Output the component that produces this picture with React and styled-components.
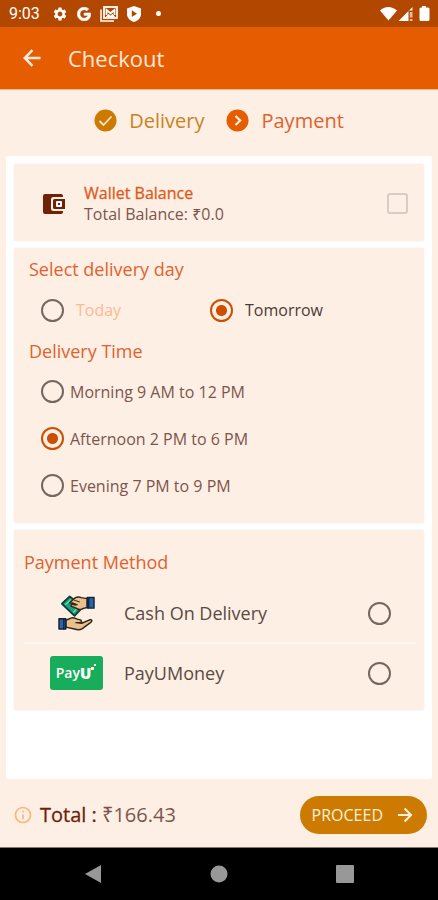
import React, { useState } from "react";
import styled, { createGlobalStyle } from "styled-components";
import { FaGoogle } from "react-icons/fa";
import { MdSettings, MdInfoOutline } from "react-icons/md";

const color = {
  cream: "#feefe5",
  orange: "#e65c00",
  orangeDark: "#b24700",
  title: "#e0622e",
  accent: "#cc4e00",
  amber: "#cc7a00",
  brown: "#7d554c",
  maroon: "#6b1f0c",
};

const GlobalStyle = createGlobalStyle`
  *, *::before, *::after { box-sizing: border-box; }
  body { margin: 0; background: ${color.cream}; font-family: "Open Sans", "Noto Sans", sans-serif; }
  button, input { font: inherit; margin: 0; }
  h1, h2, p { margin: 0; font-weight: 400; }
`;

const Screen = styled.div`
  min-height: 100vh;
  display: flex;
  flex-direction: column;
  background: ${color.cream};
`;

const StatusBar = styled.div`
  height: 27px;
  padding: 0 8px 0 9px;
  display: flex;
  align-items: center;
  justify-content: space-between;
  background: ${color.orangeDark};
  color: #fff;
`;

const StatusGroup = styled.div`
  display: flex;
  align-items: center;
  gap: 9px;
`;

const Clock = styled.time`
  width: 34px;
  font: 400 16px/20px Roboto, sans-serif;
`;

const Dot = styled.span`
  width: 5px;
  height: 5px;
  margin-left: 6px;
  border-radius: 50%;
  background: #fff;
`;

const AppBar = styled.header`
  height: 63px;
  padding: 0 20px;
  display: flex;
  align-items: center;
  gap: 24px;
  background: ${color.orange};
  border-bottom: 1px solid #ffb596;
  color: #ffe9dc;
`;

const BarTitle = styled.h1`
  font-size: 22px;
  line-height: 30px;
`;

const IconButton = styled.button`
  display: flex;
  padding: 0;
  border: 0;
  background: none;
  color: inherit;
  cursor: pointer;
`;

const Steps = styled.nav`
  height: 66px;
  padding-bottom: 5px;
  display: flex;
  align-items: center;
  justify-content: center;
  gap: 22px;
`;

const Step = styled.a`
  display: flex;
  align-items: center;
  gap: 12px;
  font-size: 20px;
  line-height: 28px;
  text-decoration: none;
  color: ${(p) => (p.$current ? color.title : "#c98321")};
`;

const Panel = styled.main`
  flex: 1;
  margin: 0 6px;
  padding: 8px;
  display: flex;
  flex-direction: column;
  gap: 7px;
  background: #fff;
  border-radius: 2px;
`;

const Card = styled.section`
  padding: ${(p) => p.$pad};
  background: ${color.cream};
  box-shadow: 0 0 2px #e9e9ee;
  border-radius: 2px;
`;

const WalletRow = styled.label`
  height: 77px;
  padding-top: 2px;
  display: flex;
  align-items: center;
  gap: 18px;
`;

const WalletText = styled.span`
  flex: 1;
  font-size: 16px;
  line-height: 21px;
  color: ${color.brown};
`;

const WalletName = styled.span`
  display: block;
  color: #dd5a1c;
  -webkit-text-stroke: 0.3px currentColor;
`;

const CheckBox = styled.input`
  appearance: none;
  width: 21px;
  height: 21px;
  border: 2px solid #dacbc4;
  border-radius: 3px;
  &:checked { background: ${color.accent}; border-color: ${color.accent}; }
`;

const Heading = styled.h2`
  font-size: 18px;
  line-height: 26px;
  color: ${color.title};
`;

const DayGrid = styled.div`
  height: 56px;
  display: grid;
  grid-template-columns: 169px 1fr;
  align-items: center;
  padding-left: 12px;
`;

const TimeList = styled.div`
  padding: 4px 0 0 12px;
`;

const Option = styled.label`
  display: flex;
  align-items: center;
  gap: ${(p) => (p.$wide ? 12 : 6)}px;
  font-size: 16px;
  color: ${(p) => p.$tone || color.brown};
`;

const TimeOption = styled(Option)`
  height: 47px;
`;

const Radio = styled.input.attrs({ type: "radio" })`
  appearance: none;
  flex: none;
  width: 23px;
  height: 23px;
  border: 2px solid #75675f;
  border-radius: 50%;
  &:checked {
    border-color: ${color.accent};
    background: radial-gradient(circle, ${color.accent} 5px, transparent 6px);
  }
`;

const Methods = styled.div`
  margin-top: 9px;
`;

const Method = styled.label`
  height: 58px;
  display: grid;
  grid-template-columns: 100px 1fr auto;
  align-items: center;
  padding-right: 25px;
  font-size: 18px;
  color: #5b4a43;
  & + & { height: 60px; border-top: 2px solid #fffaf7; }
`;

const MethodArt = styled.span`
  display: flex;
  justify-content: center;
  padding-left: 4px;
`;

const PayULogo = styled.span`
  width: 53px;
  height: 34px;
  display: flex;
  align-items: center;
  justify-content: center;
  border-radius: 3px;
  background: #18ad5b;
  color: #fff;
  font-size: 14px;
  font-weight: 600;
  line-height: 20px;
  b { font-weight: 800; font-size: 15px; }
  svg { align-self: flex-start; margin-top: 8px; }
`;

const Footer = styled.footer`
  height: 69px;
  padding: 4px 11px 0 13px;
  display: flex;
  align-items: center;
  gap: 7px;
  border-bottom: 1px solid #837b76;
  color: #ffb27a;
`;

const Total = styled.p`
  flex: 1;
  font-size: 20px;
  line-height: 28px;
  color: ${color.brown};
`;

const TotalLabel = styled.span`
  font-weight: 500;
  color: ${color.maroon};
  -webkit-text-stroke: 0.3px currentColor;
`;

const Proceed = styled.button`
  height: 38px;
  padding: 0 12px;
  display: flex;
  align-items: center;
  gap: 12px;
  border: 0;
  border-radius: 19px;
  background: ${color.amber};
  color: #fff0dc;
  font-size: 16px;
  cursor: pointer;
`;

const NavBar = styled.nav`
  height: 52px;
  display: grid;
  grid-template-columns: repeat(3, 126px);
  justify-content: center;
  align-items: center;
  justify-items: center;
  background: #000;
  color: #989898;
`;

const BackArrow = () => (
  <svg width="24" height="24" viewBox="0 0 24 24" fill="none" stroke="currentColor" strokeWidth="2.500">
    <path d="M20.500 12H5M12.500 4.200L4.800 12l7.700 7.800" />
  </svg>
);

const ForwardArrow = () => (
  <svg width="20" height="20" viewBox="0 0 24 24" fill="none" stroke="currentColor" strokeWidth="2.600">
    <path d="M3.500 12H19M11.500 4.200l7.700 7.800-7.700 7.800" />
  </svg>
);

const GalleryIcon = () => (
  <svg width="18" height="16" viewBox="0 0 18 16" fill="none" stroke="#fff">
    <path d="M1 3.500V15h13" strokeWidth="1.500" />
    <rect x="4" y="1" width="13" height="11" strokeWidth="1.800" />
    <path d="M6.500 9V4l4 3.300L14.500 4v5" strokeWidth="1.800" />
    <path d="M6.500 10.500l2-2 2 1.500 2-1.500 2 2z" fill="#fff" />
  </svg>
);

const ShieldIcon = () => (
  <svg width="14" height="16" viewBox="0 0 14 16">
    <path fill="#fff" d="M7 0l7 2.500v5.500c0 3.800-3 6.800-7 8-4-1.200-7-4.200-7-8V2.500z" />
    <path fill={color.orangeDark} d="M4.800 4.300l5.200 3.400-5.200 3.400z" />
  </svg>
);

const SignalIcons = () => (
  <svg width="50" height="16" viewBox="0 0 50 16" fill="#fff">
    <path d="M0 4.500C4.500-.2 12-.2 17 4.500L8.500 14.500z" />
    <path d="M18.500 15L32.500 1v3.500h-4V15z" />
    <path d="M29.800 6h2.700v5.500h-2.700zM29.800 13h2.700v2h-2.700z" opacity=".65" />
    <path d="M42 1.500V0h4v1.500h2q1.500 0 1.500 1.500v10.500q0 1.500-1.500 1.500h-7q-1.500 0-1.500-1.500V3q0-1.500 1.500-1.500z" />
  </svg>
);

const StepDone = () => (
  <svg width="23" height="23" viewBox="0 0 23 23">
    <circle cx="11.500" cy="11.500" r="11" fill={color.amber} />
    <path d="M5.500 12l4 4 8-8.500" fill="none" stroke="#fbe3c8" strokeWidth="1.800" />
  </svg>
);

const StepNext = () => (
  <svg width="23" height="23" viewBox="0 0 23 23">
    <circle cx="11.500" cy="11.500" r="11" fill={color.orange} />
    <path d="M9.500 7l4.700 4.500-4.700 4.500" fill="none" stroke="#fff0e4" strokeWidth="2.200" />
  </svg>
);

const WalletIcon = () => (
  <svg width="24" height="22" viewBox="0 0 24 22">
    <path fill="#702206" d="M3 1h16q2 0 2 2v1H11.500Q9 4 9 6.500v9Q9 18 11.500 18H21v1q0 2-2 2H3q-2 0-2-2V3q0-2 2-2z" />
    <path fill="#702206" d="M12.500 6H23v10H12.500q-1.500 0-1.500-1.500v-7Q11 6 12.500 6z" />
    <rect x="14" y="8" width="6" height="6" rx="1" fill="#fff" />
    <rect x="16" y="10" width="2" height="2" fill="#702206" />
  </svg>
);

const CashIcon = () => (
  <svg width="37" height="36" viewBox="0 0 38 37" strokeLinejoin="round" strokeLinecap="round">
    <path d="M4 9l8-7.500L26 12l-9 9.500z" fill="#16a37c" stroke="#0f3a35" strokeWidth="1.800" />
    <path d="M8 9.500l5-4.500M16 17.500l5-5" stroke="#74dcb8" strokeWidth="1.300" />
    <path d="M12 8l5-4.500c2-1.500 5-1.500 7-.8l6 1v9l-5 1.500c-2 1-5 .6-7-1l-4-1.500c-1.500-1 0-2.500 1.500-2l3 .5-4-1.700z" fill="#eac18d" stroke="#33251b" strokeWidth="1.500" />
    <path d="M17 5.500l5 1.500M15 8l5 2" fill="none" stroke="#33251b" strokeWidth="1" />
    <rect x="30" y="2.500" width="7" height="11" fill="#2467a8" stroke="#14243b" strokeWidth="1.500" />
    <path d="M31.500 3v10" stroke="#14243b" strokeWidth="1.500" />
    <path d="M8 26l6-2.500c3-.6 5 1.500 8 1.800 2.500.2 3 2.700.5 2.900l-4 .2 6 .6 8-3.500c2.300-.6 3 1.200 1.200 2.600L25 34.500c-2.500 1.500-5 1.500-8 .5l-9-2z" fill="#eac18d" stroke="#33251b" strokeWidth="1.500" />
    <rect x="1" y="24.500" width="7" height="10.500" fill="#2467a8" stroke="#14243b" strokeWidth="1.500" />
    <path d="M6 25v10" stroke="#14243b" strokeWidth="1.500" />
  </svg>
);

const times = ["Morning 9 AM to 12 PM", "Afternoon 2 PM to 6 PM", "Evening 7 PM to 9 PM"];

export default function App() {
  const [day, setDay] = useState("Tomorrow");
  const [time, setTime] = useState(times[1]);
  const [method, setMethod] = useState("");

  return (
    <Screen>
      <GlobalStyle />
      <StatusBar>
        <StatusGroup>
          <Clock>9:03</Clock>
          <MdSettings size={16} />
          <FaGoogle size={14} stroke="#fff" strokeWidth={24} />
          <GalleryIcon />
          <ShieldIcon />
          <Dot />
        </StatusGroup>
        <SignalIcons />
      </StatusBar>
      <AppBar>
        <IconButton type="button" aria-label="Back"><BackArrow /></IconButton>
        <BarTitle>Checkout</BarTitle>
      </AppBar>
      <Steps aria-label="Checkout steps">
        <Step href="#delivery"><StepDone />Delivery</Step>
        <Step href="#payment" $current aria-current="step"><StepNext />Payment</Step>
      </Steps>
      <Panel>
        <Card $pad="0 16px 0 28px">
          <WalletRow>
            <WalletIcon />
            <WalletText>
              <WalletName>Wallet Balance</WalletName>
              Total Balance: ₹0.0
            </WalletText>
            <CheckBox type="checkbox" />
          </WalletRow>
        </Card>
        <Card $pad="8px 15px 14px">
          <Heading>Select delivery day</Heading>
          <DayGrid role="radiogroup" aria-label="Select delivery day">
            <Option $wide $tone="#ffb88f">
              <Radio name="day" checked={day === "Today"} onChange={() => setDay("Today")} />
              Today
            </Option>
            <Option $wide $tone="#4d3b34">
              <Radio name="day" checked={day === "Tomorrow"} onChange={() => setDay("Tomorrow")} />
              Tomorrow
            </Option>
          </DayGrid>
          <Heading>Delivery Time</Heading>
          <TimeList role="radiogroup" aria-label="Delivery Time">
            {times.map((t) => (
              <TimeOption key={t}>
                <Radio name="time" checked={time === t} onChange={() => setTime(t)} />
                {t}
              </TimeOption>
            ))}
          </TimeList>
        </Card>
        <Card $pad="19px 8px 8px 10px">
          <Heading>Payment Method</Heading>
          <Methods role="radiogroup" aria-label="Payment Method">
            <Method>
              <MethodArt><CashIcon /></MethodArt>
              Cash On Delivery
              <Radio name="method" checked={method === "cash"} onChange={() => setMethod("cash")} />
            </Method>
            <Method>
              <MethodArt>
                <PayULogo>
                  Pay<b>U</b>
                  <svg width="5" height="6" viewBox="0 0 5 6" fill="#fff"><path d="M0 3h3v3H0zM3 0h2v2H3z" /></svg>
                </PayULogo>
              </MethodArt>
              PayUMoney
              <Radio name="method" checked={method === "payu"} onChange={() => setMethod("payu")} />
            </Method>
          </Methods>
        </Card>
      </Panel>
      <Footer>
        <MdInfoOutline size={20} />
        <Total><TotalLabel>Total : </TotalLabel>₹166.43</Total>
        <Proceed type="button">PROCEED<ForwardArrow /></Proceed>
      </Footer>
      <NavBar aria-label="System navigation">
        <IconButton type="button" aria-label="Back">
          <svg width="18" height="18" viewBox="0 0 18 18" fill="currentColor"><path d="M17 0v18L1 9z" /></svg>
        </IconButton>
        <IconButton type="button" aria-label="Home">
          <svg width="18" height="18" viewBox="0 0 18 18" fill="currentColor"><circle cx="9" cy="9" r="8.500" /></svg>
        </IconButton>
        <IconButton type="button" aria-label="Recent apps">
          <svg width="18" height="18" viewBox="0 0 18 18" fill="currentColor"><rect width="18" height="18" rx="1" /></svg>
        </IconButton>
      </NavBar>
    </Screen>
  );
}
